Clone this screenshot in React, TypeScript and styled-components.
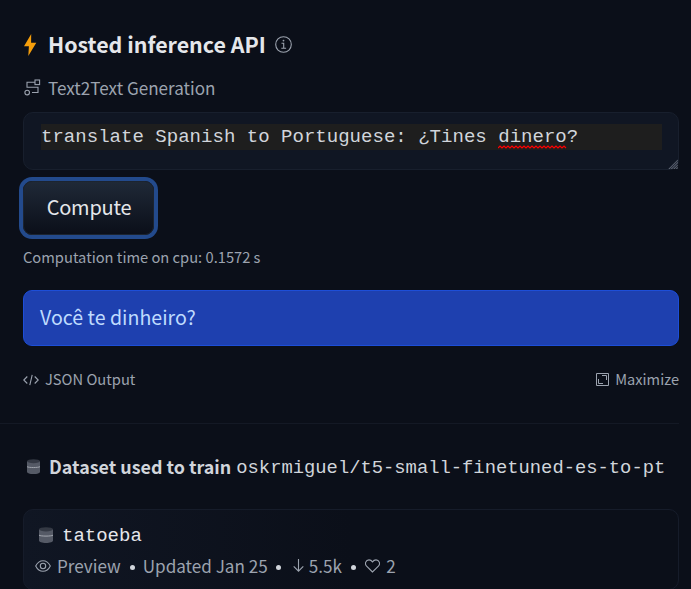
import React from "react";
import styled, { createGlobalStyle } from "styled-components";

const GlobalStyle = createGlobalStyle`
  *, *::before, *::after { box-sizing: border-box; }
  html, body { margin: 0; background: #0b0f19; overflow: hidden; }
  body { font-family: "Noto Sans CJK SC", sans-serif; color: #9ca3af; }
  svg { display: block; flex: none; }
`;

const Text = styled.span<{
  $size: number;
  $color?: string;
  $bold?: boolean;
  $spacing?: number;
  $lift?: number;
  $left?: number;
}>`
  margin: 0 0 ${(p) => (p.$lift ?? 0) * 2}px ${(p) => p.$left ?? 0}px;
  font-size: ${(p) => p.$size}px;
  color: ${(p) => p.$color ?? "#9ca3af"};
  font-weight: ${(p) => (p.$bold ? 700 : 400)};
  letter-spacing: ${(p) => p.$spacing ?? 0}px;
  white-space: pre;
`;

const Mono = styled(Text)`
  font-family: "Liberation Mono", monospace;
`;

const Page = styled.main`
  width: 691px;
  height: 589px;
  overflow: hidden;
`;

const Widget = styled.section`
  width: 679px;
  height: 424px;
  padding: 29px 0 0 23px;
  border-bottom: 1px solid #141925;
`;

const Row = styled.div<{ $height: number; $top?: number; $left?: number }>`
  display: flex;
  align-items: center;
  height: ${(p) => p.$height}px;
  line-height: ${(p) => p.$height}px;
  margin-top: ${(p) => p.$top ?? 0}px;
  padding-left: ${(p) => p.$left ?? 0}px;
`;

const Icon = styled.span<{ $right?: number; $left?: number; $up?: number }>`
  display: flex;
  margin: 0 ${(p) => p.$right ?? 0}px ${(p) => (p.$up ?? 0) * 2}px ${(p) => p.$left ?? 0}px;
`;

const Prompt = styled.div`
  position: relative;
  height: 58px;
  margin-top: 8px;
  padding: 11px 16px 0 17px;
  border: 1px solid #181f2d;
  border-radius: 10px;
  background: #101623;
`;

const PromptLine = styled.div`
  height: 26px;
  line-height: 23px;
  background: #1e1e1e;
`;

const Misspelled = styled.span`
  position: relative;
`;

const Squiggle = styled.svg`
  position: absolute;
  left: 0;
  top: 19px;
`;

const Grip = styled.svg`
  position: absolute;
  right: 0;
  bottom: 0;
`;

const Compute = styled.button`
  display: flex;
  align-items: center;
  justify-content: center;
  width: 131px;
  height: 54px;
  margin: 11px 0 0;
  padding: 0;
  border: 1px solid #1c2430;
  border-radius: 9px;
  background: linear-gradient(#1f2937, #0b0f19);
  box-shadow: 0 0 0 4px #234a8c;
  font-family: inherit;
`;

const Result = styled.div`
  display: flex;
  align-items: center;
  height: 56px;
  margin-top: 20px;
  padding-left: 16px;
  border: 1px solid #1d4ed8;
  border-radius: 9px;
  background: #1e40af;
  line-height: 54px;
`;

const Spacer = styled.span`
  flex: 1;
`;

const Dataset = styled.section`
  width: 679px;
  padding: 29px 0 0 23px;
`;

const Card = styled.article`
  height: 81px;
  margin-top: 28px;
  padding-top: 10px;
  border: 1px solid #161c2a;
  border-radius: 10px;
  background: linear-gradient(90deg, #101623, #0b0f19 50%);
`;

const Dot = styled.i<{ $left: number; $right: number }>`
  width: 5px;
  height: 5px;
  margin: 3px ${(p) => p.$right}px 0 ${(p) => p.$left}px;
  border-radius: 50%;
  background: #d1d5db;
`;

const Database = ({ width = 14, height = 16 }: { width?: number; height?: number }) => (
  <svg width={width} height={height} viewBox="0 0 14 16" preserveAspectRatio="none">
    <path d="M0 2.2h14v11.3c0 1.4-3 2.5-7 2.5s-7-1.1-7-2.5z" fill="#555a66" />
    <ellipse cx="7" cy="2.3" rx="7" ry="2.1" fill="#343944" />
    <path d="M0 8.2c2 1.2 12 1.2 14 0" fill="none" stroke="#a4a8b0" strokeWidth="1" />
  </svg>
);

export default function App() {
  return (
    <Page>
      <GlobalStyle />
      <Widget>
        <Row $height={32}>
          <Icon $right={11} $up={0.5}>
            <svg width="14" height="22" viewBox="0 0 14 22">
              <path d="M8.2 0 1 12.2h4.9L5.3 22 13.3 8.8H8.1z" fill="#f59e0b" />
            </svg>
          </Icon>
          <Text $size={21.4} $lift={1} $color="#e5e7eb" $bold>Hosted inference API</Text>
          <Icon $left={9} $up={0.5}>
            <svg width="17" height="17" viewBox="0 0 17 17" fill="none" stroke="#9ca3af" strokeWidth="1.1">
              <circle cx="8.5" cy="8.5" r="7.8" />
              <path d="M6.5 7.3h2.2v5M6.3 12.3h4.8" />
              <circle cx="8.5" cy="4.6" r=".9" fill="#9ca3af" stroke="none" />
            </svg>
          </Icon>
        </Row>
        <Row $height={28} $top={15}>
          <Icon $left={1} $right={7} $up={2.5}>
            <svg width="17" height="17" viewBox="0 0 17 17" fill="none" stroke="#9ca3af" strokeWidth="1.1">
              <rect x="11" y="1" width="4.6" height="4.6" />
              <path d="M11 3.2H3v5.1h11v5.2H8" />
              <circle cx="3.2" cy="13.6" r="2.3" fill="#0b0f19" />
            </svg>
          </Icon>
          <Text $size={17.1} $lift={2}>Text2Text Generation</Text>
        </Row>
        <Prompt>
          <PromptLine>
            <Mono $size={19.06} $color="#d1d5db">
              {"translate Spanish to Portuguese: ¿Tines "}
              <Misspelled>
                dinero
                <Squiggle width="69" height="4" fill="none" stroke="#f00" strokeWidth="1.2">
                  <path d={"M0 3" + "l2-2 2 2".repeat(17)} />
                </Squiggle>
              </Misspelled>
              ?
            </Mono>
          </PromptLine>
          <Grip width="10" height="10" stroke="#6b7280" strokeWidth="1.2" strokeDasharray="1 .4">
            <path d="M1 10 10 1M3.5 10 10 3.5M6 10l4-4M8.5 10 10 8.5" />
          </Grip>
        </Prompt>
        <Compute>
          <Text $size={20} $spacing={-0.25} $lift={2} $left={1} $color="#e5e7eb">Compute</Text>
        </Compute>
        <Row $height={24} $top={11}>
          <Text $size={14.7} $lift={1}>Computation time on cpu: 0.1572 s</Text>
        </Row>
        <Result>
          <Text $size={19.6} $lift={1} $color="#bfdbfe">Você te dinheiro?</Text>
        </Result>
        <Row $height={24} $top={22}>
          <Icon $right={6} $up={0.5}>
            <svg width="16" height="12" viewBox="0 0 16 12" fill="none" stroke="#9ca3af" strokeWidth="1.1">
              <path d="M4.3 2.5.8 6l3.5 3.5M11.7 2.5 15.2 6l-3.5 3.5M9.2.8 6.8 11.2" />
            </svg>
          </Icon>
          <Text $size={14.7} $lift={1}>JSON Output</Text>
          <Spacer />
          <Icon $right={6.5} $up={0.5}>
            <svg width="13" height="13" viewBox="0 0 13 13" fill="none" stroke="#9ca3af" strokeWidth="1">
              <path d="M.5.5h12v12H.5zM6 2.5h4.5V7M2.5 6v4.5H7" />
            </svg>
          </Icon>
          <Text $size={14.6} $lift={1}>Maximize</Text>
        </Row>
      </Widget>
      <Dataset>
        <Row $height={28} $left={4}>
          <Icon $right={9} $up={0.5}><Database width={13} height={15} /></Icon>
          <Text $size={17.9} $lift={1} $color="#d1d5db" $bold>Dataset used to train</Text>
          <Mono $size={18.82} $lift={-0.75} $left={5} $color="#d1d5db">oskrmiguel/t5-small-finetuned-es-to-pt</Mono>
        </Row>
        <Card>
          <Row $height={30} $left={15}>
            <Icon $right={9}><Database /></Icon>
            <Mono $size={19} $lift={-1} $color="#e5e7eb">tatoeba</Mono>
          </Row>
          <Row $height={28} $top={2} $left={11}>
            <Icon $right={6} $up={0.5}>
              <svg width="16" height="12" viewBox="0 0 16 12" fill="none" stroke="#9ca3af" strokeWidth="1.1">
                <path d="M.7 6C2.4 2.5 5 .7 8 .7S13.6 2.5 15.3 6C13.6 9.5 11 11.3 8 11.3S2.4 9.5.7 6z" />
                <circle cx="8" cy="6" r="2.7" />
              </svg>
            </Icon>
            <Text $size={17.1}>Preview</Text>
            <Dot $left={9} $right={8} />
            <Text $size={17.1}>Updated Jan 25</Text>
            <Dot $left={8.5} $right={11.5} />
            <Icon $right={5} $up={1}>
              <svg width="11" height="13" viewBox="0 0 11 13" fill="none" stroke="#9ca3af" strokeWidth="1.1">
                <path d="M5.5 0v12M.7 7.4l4.8 4.8 4.8-4.8" />
              </svg>
            </Icon>
            <Text $size={17.1}>5.5k</Text>
            <Dot $left={9} $right={9.5} />
            <Icon $right={6} $up={0.5}>
              <svg width="15" height="14" viewBox="0 0 15 14" fill="none" stroke="#9ca3af" strokeWidth="1.1">
                <path d="M7.5 13 1.6 7.2C-.7 4.8.8.9 4 .9c1.5 0 2.6.7 3.5 2C8.4 1.6 9.5.9 11 .9c3.2 0 4.7 3.9 2.4 6.3z" />
              </svg>
            </Icon>
            <Text $size={17.1}>2</Text>
          </Row>
        </Card>
      </Dataset>
    </Page>
  );
}
